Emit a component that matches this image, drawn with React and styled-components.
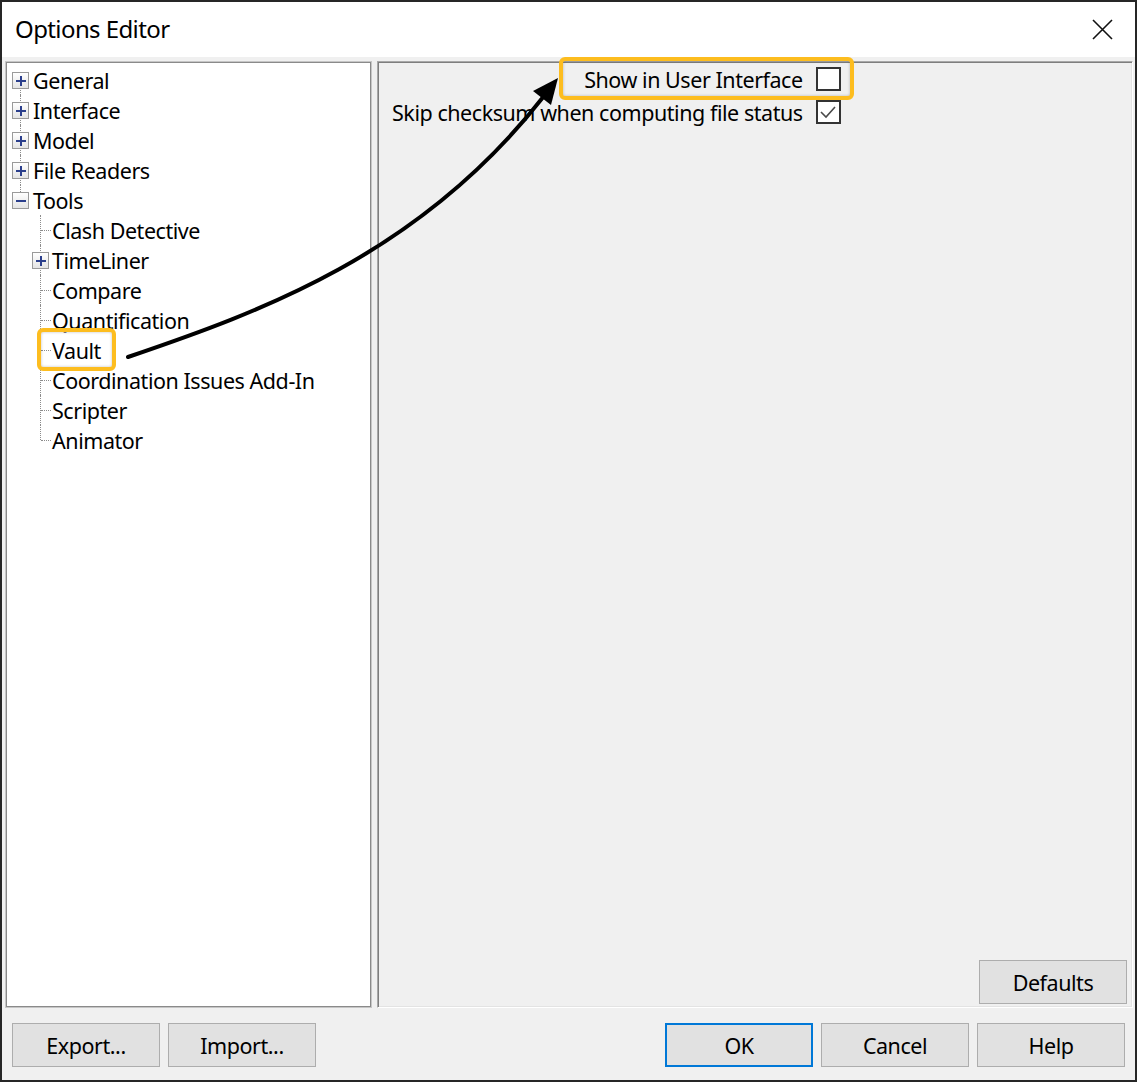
import React from 'react'
import styled, { createGlobalStyle } from 'styled-components'

const GlobalStyle = createGlobalStyle`
  html, body {
    margin: 0;
    padding: 0;
    background: #ffffff;
  }
  * {
    box-sizing: border-box;
  }
`

const topLevel = [
  { label: 'General', line: 'start' },
  { label: 'Interface', line: 'full' },
  { label: 'Model', line: 'full' },
  { label: 'File Readers', line: 'full' },
  { label: 'Tools', line: 'end', open: true },
]

const toolItems = [
  { label: 'Clash Detective', line: 'tee' },
  { label: 'TimeLiner', line: 'full', box: true },
  { label: 'Compare', line: 'tee' },
  { label: 'Quantification', line: 'tee' },
  { label: 'Vault', line: 'tee' },
  { label: 'Coordination Issues Add-In', line: 'tee' },
  { label: 'Scripter', line: 'tee' },
  { label: 'Animator', line: 'end' },
]

const settings = [
  { label: 'Show in User Interface', checked: false },
  { label: 'Skip checksum when computing file status', checked: true },
]

const Expander = ({ open }) => (
  <StyledExpander>
    <svg width='10' height='10' viewBox='0 0 10 10'>
      <rect x='0' y='4' width='10' height='2' fill='#2b3f8c' />
      {!open && <rect x='4' y='0' width='2' height='10' fill='#2b3f8c' />}
    </svg>
  </StyledExpander>
)

const Gutter = ({ line, box, open }) => (
  <StyledGutter>
    {line && <StyledVLine $line={line} />}
    {(line === 'tee' || (line === 'end' && !box)) && <StyledTick />}
    {box && <Expander open={open} />}
  </StyledGutter>
)

const Checkbox = ({ checked }) => (
  <StyledCheckbox>
    {checked && (
      <svg width='18' height='14' viewBox='0 0 18 14'>
        <polyline
          points='2,7 7,12 16,2'
          fill='none'
          stroke='#4a4a4a'
          strokeWidth='1.6'
        />
      </svg>
    )}
  </StyledCheckbox>
)

const Annotations = () => (
  <StyledOverlay>
    <StyledHighlight style={{ left: 559, top: 57, width: 295, height: 43 }} />
    <StyledHighlight style={{ left: 37, top: 328, width: 79, height: 43 }} />
    <svg width='1137' height='1082' viewBox='0 0 1137 1082'>
      <path
        d='M128 357 C 260 312, 420 255, 544 96'
        fill='none'
        stroke='#000'
        strokeWidth='4'
        strokeLinecap='round'
      />
      <polygon points='558,78 551,105 533,91' fill='#000' />
    </svg>
  </StyledOverlay>
)

const App = () => {
  return (
    <StyledFrame>
      <GlobalStyle />
      <StyledWindow>
        <StyledTitleBar>
          <StyledTitle>Options Editor</StyledTitle>
          <StyledClose>
            <svg width='21' height='21' viewBox='0 0 21 21'>
              <path
                d='M1 1 L20 20 M20 1 L1 20'
                stroke='#111'
                strokeWidth='1.6'
                fill='none'
              />
            </svg>
          </StyledClose>
        </StyledTitleBar>

        <StyledBody>
          <StyledPanes>
            <StyledTreePane>
              {topLevel.map((item) => (
                <StyledTreeRow key={item.label}>
                  <Gutter line={item.line} box open={item.open} />
                  <StyledTreeLabel>{item.label}</StyledTreeLabel>
                </StyledTreeRow>
              ))}
              {toolItems.map((item) => (
                <StyledTreeRow key={item.label}>
                  <Gutter />
                  <Gutter line={item.line} box={item.box} />
                  <StyledTreeLabel $child>{item.label}</StyledTreeLabel>
                </StyledTreeRow>
              ))}
            </StyledTreePane>

            <StyledSettingsPane>
              <StyledOptionsGrid>
                {settings.map((s) => (
                  <React.Fragment key={s.label}>
                    <StyledOptionLabel>{s.label}</StyledOptionLabel>
                    <Checkbox checked={s.checked} />
                  </React.Fragment>
                ))}
              </StyledOptionsGrid>
              <StyledPaneFooter>
                <StyledButton>Defaults</StyledButton>
              </StyledPaneFooter>
            </StyledSettingsPane>
          </StyledPanes>

          <StyledFooter>
            <StyledButtonGroup>
              <StyledButton>Export...</StyledButton>
              <StyledButton>Import...</StyledButton>
            </StyledButtonGroup>
            <StyledButtonGroup>
              <StyledButton $primary>OK</StyledButton>
              <StyledButton>Cancel</StyledButton>
              <StyledButton>Help</StyledButton>
            </StyledButtonGroup>
          </StyledFooter>
        </StyledBody>
      </StyledWindow>
      <Annotations />
    </StyledFrame>
  )
}

const StyledFrame = styled.div`
  position: relative;
  width: 1137px;
  height: 1082px;
  font-family: 'Noto Sans', 'Open Sans', sans-serif;
  color: #000;
`

const StyledWindow = styled.div`
  width: 100%;
  height: 100%;
  display: flex;
  flex-direction: column;
  border: 2px solid #262626;
  background: #f0f0f0;
`

const StyledTitleBar = styled.div`
  height: 55px;
  flex-shrink: 0;
  display: flex;
  align-items: center;
  justify-content: space-between;
  padding: 0 22px 0 13px;
  background: #ffffff;
`

const StyledTitle = styled.div`
  font-size: 24px;
  letter-spacing: -0.6px;
  padding-bottom: 2px;
`

const StyledClose = styled.div`
  display: flex;
  align-items: center;
  height: 21px;
`

const StyledBody = styled.div`
  flex: 1;
  display: flex;
  flex-direction: column;
  padding: 4px 2px 0 3px;
  min-height: 0;
`

const StyledPanes = styled.div`
  flex: 1;
  display: flex;
  gap: 5px;
  min-height: 0;
`

const StyledTreePane = styled.div`
  width: 367px;
  flex-shrink: 0;
  background: #ffffff;
  border: 1px solid #c6c6c6;
  box-shadow: inset 0 0 0 1px #8a8a8a;
  padding: 3px 0 0 5px;
`

const StyledTreeRow = styled.div`
  display: flex;
  align-items: stretch;
  height: 30px;
`

const StyledGutter = styled.div`
  position: relative;
  width: 20px;
  flex-shrink: 0;
`

const StyledVLine = styled.div`
  position: absolute;
  left: 9px;
  width: 0;
  border-left: 1px dotted #8c8c8c;
  top: ${(p) => (p.$line === 'start' ? '15px' : '0')};
  bottom: ${(p) => (p.$line === 'end' ? '15px' : '0')};
`

const StyledTick = styled.div`
  position: absolute;
  left: 10px;
  right: 0;
  top: 15px;
  border-top: 1px dotted #8c8c8c;
`

const StyledExpander = styled.div`
  position: absolute;
  left: 1px;
  top: 7px;
  width: 17px;
  height: 17px;
  display: flex;
  align-items: center;
  justify-content: center;
  border: 1px solid #9a9a9a;
  background: linear-gradient(#ffffff, #e4e4e4);
`

const StyledTreeLabel = styled.div`
  display: flex;
  align-items: center;
  padding-left: ${(p) => (p.$child ? '1px' : '2px')};
  font-size: 21.5px;
  letter-spacing: -0.45px;
  white-space: nowrap;
`

const StyledSettingsPane = styled.div`
  flex: 1;
  display: flex;
  flex-direction: column;
  border: 1px solid;
  border-color: #a8a8a8 #ffffff #ffffff #a8a8a8;
  box-shadow: inset 1px 1px 0 #7e7e7e, inset -1px -1px 0 #e3e3e3;
`

const StyledOptionsGrid = styled.div`
  display: grid;
  grid-template-columns: max-content 25px;
  column-gap: 13px;
  row-gap: 8px;
  align-items: start;
  padding: 5px 0 0 14px;
`

const StyledOptionLabel = styled.div`
  justify-self: end;
  padding-top: 1px;
  font-size: 21.5px;
  letter-spacing: -0.45px;
  line-height: 24px;
  white-space: nowrap;
`

const StyledCheckbox = styled.div`
  width: 25px;
  height: 24px;
  display: flex;
  align-items: center;
  justify-content: center;
  border: 2px solid #333333;
  background: #ffffff;
`

const StyledPaneFooter = styled.div`
  margin-top: auto;
  display: flex;
  justify-content: flex-end;
  padding: 0 5px 3px 0;
`

const StyledFooter = styled.div`
  display: flex;
  justify-content: space-between;
  padding: 15px 8px 13px 7px;
`

const StyledButtonGroup = styled.div`
  display: flex;
  gap: 8px;
`

const StyledButton = styled.button`
  width: 148px;
  height: 44px;
  font-family: inherit;
  font-size: 21.5px;
  letter-spacing: -0.45px;
  color: #000;
  background: #e1e1e1;
  border: ${(p) => (p.$primary ? '2px solid #0078d7' : '1px solid #adadad')};
  padding: 0;
`

const StyledOverlay = styled.div`
  position: absolute;
  inset: 0;
  pointer-events: none;

  svg {
    position: absolute;
    left: 0;
    top: 0;
  }
`

const StyledHighlight = styled.div`
  position: absolute;
  border: 4px solid #fdbd1f;
  border-radius: 6px;
  box-shadow: inset 0 0 3px rgba(0, 0, 0, 0.25);
`

export default App
